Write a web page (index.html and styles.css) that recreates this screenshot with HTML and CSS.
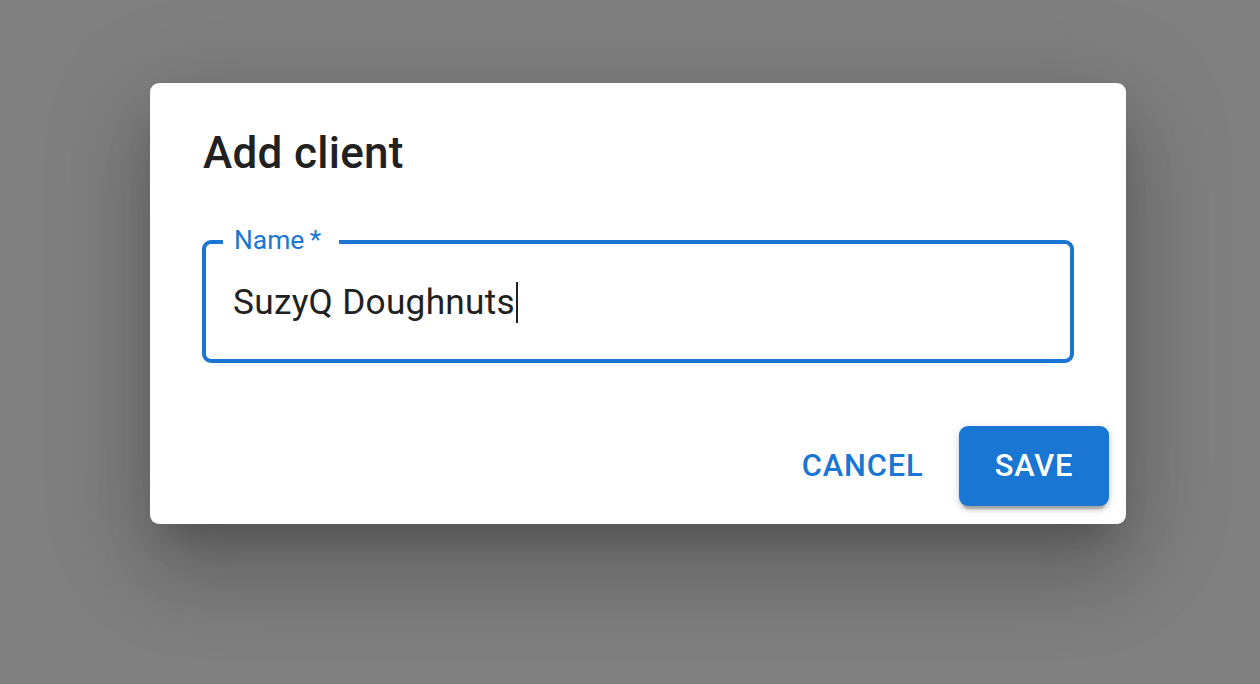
FILE: index.html
```html
<!DOCTYPE html>
<html lang="en">
<head>
    <meta charset="UTF-8">
    <meta name="viewport" content="width=device-width, initial-scale=1.0">
    <title>Add client</title>
    <link rel="stylesheet" href="styles.css">
</head>
<body>
    <div class="dialog">
        <h2 class="dialog-title">Add client</h2>
        <div class="dialog-content">
            <div class="field">
                <label class="field-label">Name&thinsp;*</label>
                <div class="field-value">SuzyQ Doughnuts<span class="caret"></span></div>
            </div>
        </div>
        <div class="dialog-actions">
            <button class="btn btn-text">Cancel</button>
            <button class="btn btn-contained">Save</button>
        </div>
    </div>
</body>
</html>
```

FILE: styles.css
```css
html, body {
    height: 100%;
}
body {
    margin: 0;
    padding: 83px 0 0 150px;
    box-sizing: border-box;
    background-color: #808080;
    font-family: Roboto, "Noto Sans", Arial, sans-serif;
    color: #212121;
    overflow: hidden;
}
.dialog {
    width: 976px;
    background: #fff;
    border-radius: 9px;
    box-shadow: 0 24px 33px -15px rgba(0, 0, 0, 0.2),
                0 53px 84px 7px rgba(0, 0, 0, 0.14),
                0 20px 101px 18px rgba(0, 0, 0, 0.12);
}
.dialog-title {
    margin: 0;
    padding: 35px 53px 0;
    font-size: 44px;
    font-weight: 500;
    line-height: 70px;
    letter-spacing: 0.3px;
}
.dialog-content {
    padding: 52px 52px 0;
}
.field {
    position: relative;
    height: 123px;
    box-sizing: border-box;
    border: 4.4px solid #1976d2;
    border-radius: 9px;
    display: flex;
    align-items: center;
    padding: 2px 0 0 27px;
}
.field-label {
    position: absolute;
    left: 17px;
    top: -17px;
    padding: 0 18px 0 11px;
    background: #fff;
    color: #1976d2;
    font-size: 26.4px;
    line-height: 26.4px;
}
.field-value {
    font-size: 35.2px;
    line-height: 1.2;
    letter-spacing: 0.3px;
}
.caret {
    display: inline-block;
    width: 2px;
    height: 41px;
    margin-left: 1px;
    vertical-align: -9px;
    background: #212121;
}
.dialog-actions {
    display: flex;
    justify-content: flex-end;
    gap: 18px;
    padding: 17.6px 17px 18.6px;
    margin-top: 45px;
}
.btn {
    font-family: inherit;
    font-size: 30.8px;
    font-weight: 500;
    line-height: 1.75;
    letter-spacing: 0.88px;
    text-transform: uppercase;
    border: none;
    border-radius: 9px;
    cursor: pointer;
}
.btn-text {
    padding: 13.2px 17.6px;
    background: transparent;
    color: #1976d2;
}
.btn-contained {
    padding: 13.2px 35.6px;
    background-color: #1976d2;
    color: #fff;
    box-shadow: 0 7px 2px -4px rgba(0, 0, 0, 0.2),
                0 4px 4px 0 rgba(0, 0, 0, 0.14),
                0 2px 11px 0 rgba(0, 0, 0, 0.12);
}
```
